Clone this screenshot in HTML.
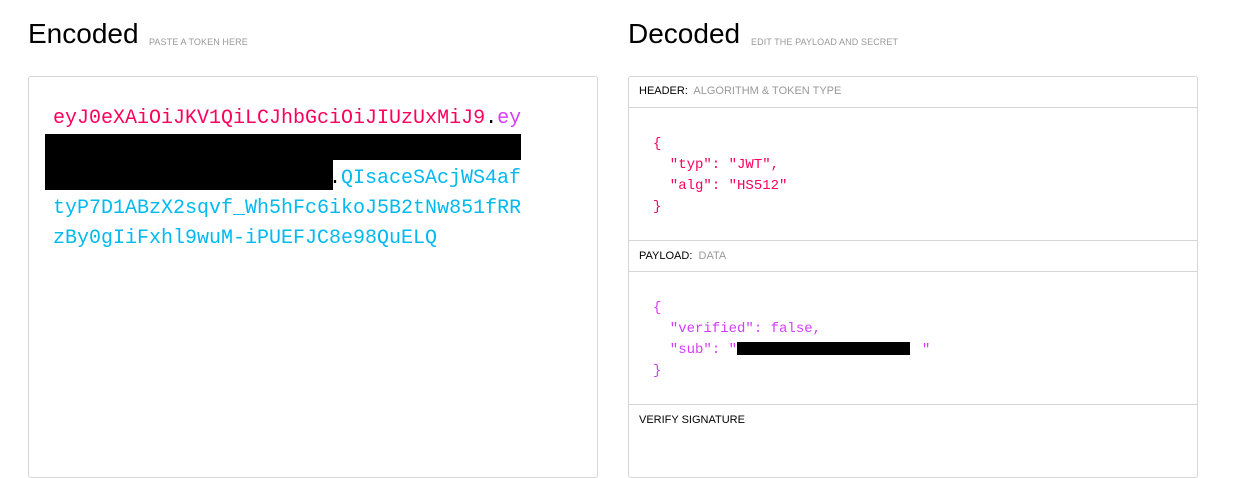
<!DOCTYPE html>
<html><head><meta charset="utf-8"><style>
body{margin:0;width:1235px;height:435px;overflow:hidden;background:#fff;font-family:"Liberation Sans",sans-serif;position:relative}
.a{position:absolute}
.t{font-size:28px;color:#000;top:18px}
.s{font-size:9px;color:#999;top:37px;letter-spacing:0.1px}
.box{border:1px solid #d6d6d6;border-radius:3px;height:400px}
.m{font-family:"Liberation Mono",monospace;white-space:pre}
.tok{font-size:20px;line-height:30px}
.r{color:#fb015b}.p{color:#d63aff}.c{color:#00b9f1}
.row{left:629px;width:568px;border-top:1px solid #d6d6d6;font-size:11px;color:#000;box-sizing:border-box;padding-left:10px}
.row span{color:#999}
.j{font-size:14px;line-height:21px}
</style></head><body>
<div class="a t" style="left:28px">Encoded</div>
<div class="a s" style="left:149px">PASTE A TOKEN HERE</div>
<div class="a t" style="left:628px">Decoded</div>
<div class="a s" style="left:751px">EDIT THE PAYLOAD AND SECRET</div>
<div class="a box" style="left:28px;top:76px;width:568px"></div>
<div class="a box" style="left:628px;top:76px;width:568px"></div>
<div class="a m tok" style="left:53px;top:104px"><span class="r">eyJ0eXAiOiJKV1QiLCJhbGciOiJIUzUxMiJ9</span>.<span class="p">ey</span>


<span class="c">tyP7D1ABzX2sqvf_Wh5hFc6ikoJ5B2tNw851fRR</span>
<span class="c">zBy0gIiFxhl9wuM-iPUEFJC8e98QuELQ</span></div>
<div class="a m tok" style="left:329px;top:164px">.<span class="c">QIsaceSAcjWS4af</span></div>
<div class="a" style="left:45px;top:134px;width:476px;height:26px;background:#000"></div>
<div class="a" style="left:45px;top:159px;width:288px;height:31px;background:#000"></div>
<div class="a row" style="top:76px;height:31px;line-height:31px;border-top:none">HEADER:&nbsp; <span>ALGORITHM &amp; TOKEN TYPE</span></div>
<div class="a row" style="top:107px;height:1px"></div>
<div class="a m j r" style="left:653px;top:134px">{
  "typ": "JWT",
  "alg": "HS512"
}</div>
<div class="a row" style="top:240px;height:31px;line-height:31px">PAYLOAD:&nbsp; <span>DATA</span></div>
<div class="a row" style="top:271px;height:1px"></div>
<div class="a m j p" style="left:653px;top:298px">{
  "verified": false,
  "sub": "                      "
}</div>
<div class="a" style="left:737px;top:342px;width:173px;height:13px;background:#000"></div>
<div class="a row" style="top:404px;height:31px;line-height:31px">VERIFY SIGNATURE</div>
</body></html>
